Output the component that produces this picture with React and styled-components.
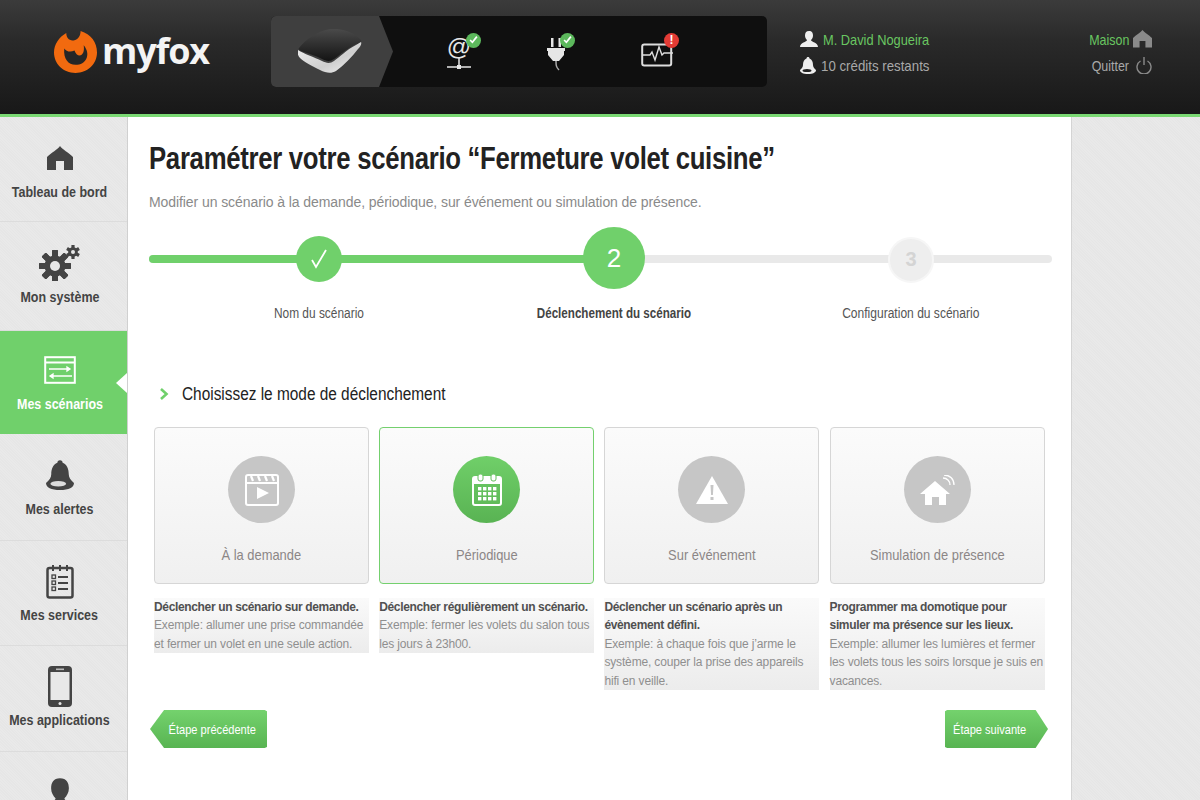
import React from 'react';
import styled, { createGlobalStyle } from 'styled-components';

const GlobalStyle = createGlobalStyle`
  html, body {
    margin: 0;
    padding: 0;
    background: #fff;
    font-family: 'Liberation Sans', Arial, sans-serif;
  }
  * { box-sizing: border-box; }
`;

const green = '#70d06b';
const texture = `repeating-linear-gradient(45deg, #e9e9e9 0 1px, #e6e6e6 1px 2px)`;

const Page = styled.div`
  width: 1200px;
  height: 800px;
  overflow: hidden;
  display: flex;
  flex-direction: column;
`;

// the reference font is a tall narrow grotesque, nothing installed has that width
const Narrow = styled.span`
  display: inline-block;
  white-space: nowrap;
  transform: scaleX(${(p) => p.$x || 0.85});
  transform-origin: ${(p) => p.$origin || 'center'};
`;

const Header = styled.header`
  flex: none;
  height: 117px;
  display: flex;
  align-items: flex-start;
  padding-top: 16px;
  background: linear-gradient(#3b3b3b, #2a2a2a 35%, #181818);
  border-bottom: 3px solid #7ad873;
`;

const Logo = styled.div`
  width: 271px;
  height: 71px;
  padding-left: 54px;
  display: flex;
  align-items: center;
  gap: 5px;
`;

const LogoText = styled.span`
  font-family: 'Open Sans', sans-serif;
  font-weight: 700;
  font-size: 36px;
  letter-spacing: -1.2px;
  color: #f4f4f4;
  line-height: 1;
  margin-top: -1px;
`;

const DeviceBar = styled.nav`
  width: 496px;
  height: 71px;
  display: flex;
  align-items: center;
  background: #0f0f0f;
  border-radius: 5px;
`;

const DeviceTab = styled.div`
  width: 122px;
  height: 71px;
  padding-left: 27px;
  display: flex;
  align-items: center;
  background: #3f3f3f;
  border-radius: 5px 0 0 5px;
  clip-path: polygon(0 0, 108px 0, 122px 50%, 108px 100%, 0 100%);
`;

const StatusIcon = styled.div`
  position: relative;
  width: 36px;
  height: 40px;
  margin-left: ${(p) => p.$offset}px;
  padding-bottom: ${(p) => p.$lift || 0}px;
  display: flex;
  align-items: flex-end;
  justify-content: center;
`;

const Badge = styled.span`
  position: absolute;
  top: 1px;
  right: ${(p) => p.$right}px;
  width: 15px;
  height: 15px;
  border-radius: 50%;
  background: ${(p) => (p.$alert ? '#e33b35' : '#5cb85c')};
  color: #fff;
  font-size: 12px;
  font-weight: 700;
  line-height: 15px;
  text-align: center;
`;

const UserBlock = styled.div`
  margin-left: 33px;
  width: 240px;
  padding-top: 13px;
  display: flex;
  flex-direction: column;
  gap: 6px;
`;

const HeadLine = styled.div`
  height: 20px;
  display: flex;
  align-items: center;
  gap: ${(p) => p.$gap || 4}px;
  justify-content: ${(p) => (p.$end ? 'flex-end' : 'flex-start')};
  font-size: 15px;
  color: ${(p) => (p.$on ? '#69c661' : '#a9a9a9')};
`;

const HomeBlock = styled(UserBlock)`
  margin-left: 0;
  width: 112px;
`;

const Body = styled.div`
  flex: 1;
  display: flex;
  min-height: 0;
`;

const Sidebar = styled.aside`
  width: 128px;
  flex: none;
  background: ${texture};
  border-right: 1px solid #d0d0d0;
`;

const NavItem = styled.a`
  position: relative;
  height: ${(p) => p.$height}px;
  display: flex;
  flex-direction: column;
  align-items: center;
  padding: ${(p) => p.$top}px 8px 0 0;
  border-bottom: 1px solid ${(p) => (p.$active ? green : '#dcdcdc')};
  background: ${(p) => (p.$active ? green : 'transparent')};
  color: ${(p) => (p.$active ? '#fff' : '#444')};
  font-size: 14.5px;
  font-weight: 700;
  white-space: nowrap;
`;

const NavIcon = styled.div`
  height: 44px;
  display: flex;
  align-items: center;
  justify-content: center;
  margin-bottom: 4px;
`;

const NavNotch = styled.span`
  position: absolute;
  right: 0;
  top: 42px;
  width: 0;
  height: 0;
  border-style: solid;
  border-width: 10px 11px 10px 0;
  border-color: transparent #fff transparent transparent;
`;

const Main = styled.main`
  width: 943px;
  flex: none;
  background: #fff;
  padding: 0 21px;
`;

const Title = styled.h1`
  margin: 24px 0 0;
  font-size: 31px;
  line-height: 36px;
  font-weight: 700;
  letter-spacing: -0.35px;
  color: #222;
  white-space: nowrap;
  transform: scaleX(0.83);
  transform-origin: left;
`;

const Subtitle = styled.p`
  margin: 16px 0 0;
  font-size: 14px;
  line-height: 18px;
  letter-spacing: -0.08px;
  color: #8a8a8a;
`;

const Stepper = styled.div`
  position: relative;
  margin-top: 16px;
  width: 903px;
  height: 62px;
  display: flex;
  padding-left: 23px;
`;

const Track = styled.div`
  position: absolute;
  left: 0;
  top: 28px;
  width: 100%;
  height: 8px;
  border-radius: 4px;
  background: #e9e9e9;
`;

const TrackFill = styled.div`
  height: 100%;
  border-radius: 4px 0 0 4px;
  background: ${green};
`;

const StepCell = styled.div`
  position: relative;
  flex: none;
  width: ${(p) => p.$width}px;
  display: flex;
  align-items: center;
  justify-content: center;
`;

const StepDot = styled.div`
  width: ${(p) => p.$size}px;
  height: ${(p) => p.$size}px;
  margin-top: ${(p) => (p.$off ? 3 : p.$size < 50 ? 1 : 0)}px;
  border-radius: 50%;
  display: flex;
  align-items: center;
  justify-content: center;
  background: ${(p) => (p.$off ? '#eeeeee' : green)};
  color: ${(p) => (p.$off ? '#d4d4d4' : '#fff')};
  font-size: ${(p) => p.$font}px;
  font-weight: ${(p) => (p.$off ? 700 : 400)};
  border: ${(p) => (p.$off ? '2px solid #f6f6f6' : 'none')};
`;

const StepLabels = styled.div`
  display: flex;
  margin-top: 15px;
  padding-left: 23px;
`;

const StepLabel = styled.div`
  flex: none;
  width: ${(p) => p.$width}px;
  text-align: center;
  font-size: 14px;
  line-height: 18px;
  font-weight: ${(p) => (p.$strong ? 700 : 400)};
  color: ${(p) => (p.$strong ? '#444' : '#555')};
`;

const SectionHead = styled.div`
  margin: 60px 0 0 11px;
  height: 24px;
  display: flex;
  align-items: center;
  gap: 13px;
  font-size: 18px;
  color: #222;
`;

const Grid = styled.div`
  margin: 21px 0 0 5px;
  width: 892px;
  display: grid;
  grid-template-columns: repeat(4, 215px);
  column-gap: 10.2px;
`;

const Card = styled.div`
  height: 157px;
  display: flex;
  flex-direction: column;
  align-items: center;
  padding-top: 28px;
  border: 1px solid ${(p) => (p.$on ? '#74d06e' : '#d6d6d6')};
  border-radius: 4px;
  background: linear-gradient(#fbfbfb, #f0f0f0);
`;

const CardIcon = styled.div`
  width: 67px;
  height: 67px;
  border-radius: 50%;
  display: flex;
  align-items: center;
  justify-content: center;
  background: ${(p) => (p.$on ? 'linear-gradient(#70cf69, #59b353)' : '#c6c6c6')};
`;

const CardLabel = styled.div`
  margin-top: 22px;
  font-size: 15px;
  line-height: 20px;
  color: #8b8686;
`;

const Desc = styled.div`
  margin-top: 14px;
  align-self: start;
  background: linear-gradient(#fafafa, #ececec);
  font-size: 12px;
  line-height: 18.4px;
  letter-spacing: -0.15px;
  color: #8f8f8f;
  white-space: nowrap;
`;

const Strong = styled.strong`
  display: block;
  color: #505050;
  letter-spacing: -0.35px;
`;

const Footer = styled.div`
  margin-top: 20px;
  width: 903px;
  display: flex;
  justify-content: space-between;
  padding: 0 4px 0 1px;
`;

const StepButton = styled.button`
  width: ${(p) => p.$width}px;
  height: 38px;
  padding: ${(p) => (p.$next ? '0 16px 0 0' : '0 0 0 8px')};
  border: none;
  font-family: 'Liberation Sans', sans-serif;
  font-size: 13.5px;
  white-space: nowrap;
  color: #fff;
  background: linear-gradient(#74d26d, #58b452);
  clip-path: ${(p) =>
    p.$next
      ? 'polygon(0 3%, 2% 0, 88% 0, 100% 50%, 88% 100%, 2% 100%, 0 97%)'
      : 'polygon(12% 0, 98% 0, 100% 3%, 100% 97%, 98% 100%, 12% 100%, 0 50%)'};
`;

const RightRail = styled.div`
  flex: 1;
  background: ${texture};
  border-left: 1px solid #d4d4d4;
`;

const FoxLogo = () => (
  <svg width="43" height="43" viewBox="0 0 42 42">
    <path fill="#f26a0f" d="M26 1C36 4 42 12 42 22C42 33 33 42 21 42C9 42 0 33 0 22C0 14 5 7 12 3C12 8 15 11 20 10C24 9 26 5 26 1Z" />
    <path fill="#262626" d="M10 18C12 21 16 22 20 20C21 23 23 25 25 25C28 25 30 21 29 15C33 20 33 24 32 27C30 32 26 34 21 34C14 34 9 28 10 18Z" />
  </svg>
);

const DeviceIcon = () => (
  <svg width="64" height="45" viewBox="0 0 64 45">
    <defs>
      <linearGradient id="shell" x1="0" y1="0" x2="0" y2="1">
        <stop offset="0" stopColor="#4a4a4a" />
        <stop offset="1" stopColor="#141414" />
      </linearGradient>
      <linearGradient id="base" x1="0" y1="0" x2="1" y2="1">
        <stop offset="0" stopColor="#f2f2f2" />
        <stop offset="0.6" stopColor="#cfcfcf" />
        <stop offset="1" stopColor="#f4f4f4" />
      </linearGradient>
    </defs>
    <path fill="url(#shell)" d="M1 19C8 10 20 2 32 0C44-1 56 3 63 11C64 13 62 14 58 15C48 20 42 26 36 30C32 33 28 32 24 30C16 26 8 24 3 22C1 21 0 20 1 19Z" />
    <path fill="url(#base)" d="M0 21C6 25 16 28 24 32C28 34 32 35 36 32C42 28 48 21 58 16L63 13C64 15 62 18 60 20C54 28 46 36 38 42C33 45 28 44 22 41C14 37 6 33 2 29C0 27-1 24 0 21Z" />
  </svg>
);

const AtIcon = () => (
  <svg width="26" height="40" viewBox="0 0 26 40">
    <text x="13" y="23" textAnchor="middle" fontFamily="'Liberation Sans', sans-serif" fontSize="24" fill="#e6e6e6">@</text>
    <path stroke="#e6e6e6" strokeWidth="1.5" fill="none" d="M13 26v10M1 35h24" />
    <rect x="11" y="33" width="4" height="4" fill="#e6e6e6" />
  </svg>
);

const PlugIcon = () => (
  <svg width="20" height="38" viewBox="0 0 20 38">
    <path fill="#e6e6e6" d="M5 4h2.5v9H5zM12.5 4H15v9h-2.5zM1 14h18v3h-1v4l-5 6H7l-5-6v-4H1z" />
    <path stroke="#aaa" strokeWidth="1.5" fill="none" d="M10 27c0 4 0 6 3 9" />
  </svg>
);

const MonitorIcon = () => (
  <svg width="32" height="24" viewBox="0 0 32 24">
    <rect x="1.200" y="1.500" width="29" height="21" rx="2" fill="none" stroke="#ddd" strokeWidth="2" />
    <path stroke="#ddd" strokeWidth="1.400" fill="none" d="M1 12h8l2-3 3 8 4-13 3 8 2-2h9" />
  </svg>
);

const HomeIcon = ({ size = 26, color = '#444' }) => (
  <svg width={size} height={size * 0.93} viewBox="0 0 26 24">
    <path fill={color} d="M13 0C15 3 22 7 26 11V24H17V15H9V24H0V11C4 7 11 3 13 0Z" />
  </svg>
);

const PowerIcon = () => (
  <svg width="16" height="17" viewBox="0 0 16 17">
    <path fill="none" stroke="#8a8a8a" strokeWidth="1.400" d="M4.500 4a7 7 0 1 0 7 0M8 0v8" />
  </svg>
);

const UserIcon = ({ width = 18, height = 16, color = '#eee' }) => (
  <svg width={width} height={height} viewBox="0 0 18 16">
    <path fill={color} d="M9 0c3 0 4 2 4 4.500 0 2-1 3.500-2 4.500 0 2 7 2.500 7 7H0c0-4.500 7-5 7-7C6 8 5 6.500 5 4.500 5 2 6 0 9 0Z" />
  </svg>
);

const BellIcon = ({ width = 16, height = 17, color = '#eee', hole = '#222' }) => (
  <svg width={width} height={height} viewBox="0 0 16 17">
    <path fill={color} d="M8 0c1 0 1.500.6 1.500 1.500C12 2.500 13 5 13 8c0 2 1 3 3 5 0 2.500-3 4-8 4s-8-1.500-8-4c2-2 3-3 3-5 0-3 1-5.500 3.500-6.500C6.500.6 7 0 8 0Z" />
    <ellipse cx="7" cy="13.500" rx="4.500" ry="1.600" fill={hole} />
  </svg>
);

const GearsIcon = () => (
  <svg width="42" height="36" viewBox="0 0 42 36">
    <g fill="#444">
      <circle cx="16" cy="21" r="10.500" />
      {[0, 45, 90, 135, 180, 225, 270, 315].map((a) => (
        <rect key={a} x="13" y="5" width="6" height="32" rx="1" transform={`rotate(${a} 16 21)`} />
      ))}
      <circle cx="34" cy="7" r="4.800" />
      {[0, 60, 120].map((a) => (
        <rect key={a} x="32.400" y="0" width="3.200" height="14" rx="0.500" transform={`rotate(${a} 34 7)`} />
      ))}
    </g>
    <circle cx="16" cy="21" r="5" fill="#e8e8e8" />
    <circle cx="34" cy="7" r="2" fill="#e8e8e8" />
  </svg>
);

const ScenarioIcon = () => (
  <svg width="32" height="28" viewBox="0 0 32 28">
    <rect x="1.200" y="1.200" width="29.600" height="25.600" fill="none" stroke="#fff" strokeWidth="2" />
    <path stroke="#fff" strokeWidth="2" d="M1 6.500h30" />
    <path stroke="#fff" strokeWidth="1.300" fill="#fff" d="M5 13h21M23 11l3 2-3 2zM7 20h21M9 18l-3 2 3 2z" />
  </svg>
);

const ListIcon = () => (
  <svg width="28" height="35" viewBox="0 0 28 35">
    <rect x="1.500" y="4" width="25" height="29.500" rx="2" fill="none" stroke="#444" strokeWidth="2.500" />
    <path stroke="#444" strokeWidth="2" d="M7 1v6M14 1v6M21 1v6" />
    <g fill="none" stroke="#444" strokeWidth="1.300">
      <rect x="6" y="11" width="3.500" height="3.500" />
      <rect x="6" y="17" width="3.500" height="3.500" />
      <rect x="6" y="23" width="3.500" height="3.500" />
    </g>
    <path stroke="#444" strokeWidth="2" d="M12 13h10M12 19h10M12 25h10" />
  </svg>
);

const PhoneIcon = () => (
  <svg width="24" height="41" viewBox="0 0 24 41">
    <rect x="0" y="0" width="24" height="41" rx="4" fill="#444" />
    <rect x="2.500" y="6" width="19" height="28" fill="#e8e8e8" />
    <rect x="8" y="2.500" width="8" height="1.600" fill="#bbb" />
    <circle cx="12" cy="37.500" r="1.500" fill="#e8e8e8" />
  </svg>
);

const ClapIcon = () => (
  <svg width="34" height="32" viewBox="0 0 34 32">
    <rect x="1" y="1" width="32" height="30" rx="2" fill="none" stroke="#fff" strokeWidth="2" />
    <path stroke="#fff" strokeWidth="2" d="M1 9h32" />
    <path stroke="#fff" strokeWidth="2.200" d="M6 2l2 5M13 2l2 5M20 2l2 5M27 2l2 5" />
    <path fill="#fff" d="M12 13l12 6-12 6z" />
  </svg>
);

const CalendarIcon = () => (
  <svg width="30" height="32" viewBox="0 0 30 32">
    <rect x="1" y="3" width="28" height="28" rx="2" fill="none" stroke="#fff" strokeWidth="2" />
    <path fill="#fff" d="M1 4h28v6H1z" />
    <rect x="6" y="0" width="5" height="7" rx="2" fill="#fff" stroke="#64c05d" />
    <rect x="19" y="0" width="5" height="7" rx="2" fill="#fff" stroke="#64c05d" />
    {[0, 1, 2].map((r) =>
      [0, 1, 2, 3].map((c) => (
        <rect key={`${r}${c}`} x={6 + c * 5} y={13 + r * 5} width="3.400" height="3.400" fill="#fff" />
      ))
    )}
  </svg>
);

const WarnIcon = () => (
  <svg width="34" height="30" viewBox="0 0 34 30">
    <path fill="#fff" d="M17 1 L33 29 H1 Z" />
    <path fill="#c6c6c6" d="M15.500 10h3l-.6 10h-1.800zM15.500 22h3v3h-3z" />
  </svg>
);

const SmartHomeIcon = () => (
  <svg width="36" height="30" viewBox="0 0 36 30">
    <path fill="#fff" d="M16 6 L31 19 H27 V30 H20 V22 H13 V30 H6 V19 H1 Z" />
    <path fill="none" stroke="#fff" strokeWidth="1.300" d="M24 3c4 0 7 3 7 7M25 0c6 0 10 4 10 10" />
  </svg>
);

const Chevron = () => (
  <svg width="9" height="12" viewBox="0 0 9 12">
    <path fill="none" stroke="#70d06b" strokeWidth="2.600" d="M1 1l5.500 5L1 11" />
  </svg>
);

const Check = () => (
  <svg width="18" height="20" viewBox="0 0 18 20">
    <path fill="none" stroke="#fff" strokeWidth="1.800" d="M2 11l4 7L16 1" />
  </svg>
);

const TinyCheck = () => (
  <svg width="9" height="8" viewBox="0 0 8 7" style={{ display: 'block', margin: '3.500px auto 0' }}>
    <path fill="none" stroke="#fff" strokeWidth="1.500" d="M1 3.500l2 2 4-5" />
  </svg>
);

const navItems = [
  { label: 'Tableau de bord', icon: <HomeIcon />, height: 105, top: 19 },
  { label: 'Mon système', icon: <GearsIcon />, height: 109, top: 19 },
  { label: 'Mes scénarios', icon: <ScenarioIcon />, height: 103, top: 17, active: true },
  { label: 'Mes alertes', icon: <BellIcon width={28} height={30} color="#444" hole="#ddd" />, height: 107, top: 19 },
  { label: 'Mes services', icon: <ListIcon />, height: 105, top: 18 },
  { label: 'Mes applications', icon: <PhoneIcon />, height: 106, top: 18 },
  { label: '', icon: <UserIcon width={40} height={42} color="#444" />, height: 60, top: 23 },
];

const modes = [
  {
    label: 'À la demande',
    icon: <ClapIcon />,
    lead: ['Déclencher un scénario sur demande.'],
    text: ['Exemple: allumer une prise commandée', 'et fermer un volet en une seule action.'],
  },
  {
    label: 'Périodique',
    icon: <CalendarIcon />,
    on: true,
    lead: ['Déclencher régulièrement un scénario.'],
    text: ['Exemple: fermer les volets du salon tous', 'les jours à 23h00.'],
  },
  {
    label: 'Sur événement',
    icon: <WarnIcon />,
    lead: ['Déclencher un scénario après un', 'évènement défini.'],
    text: ['Exemple: à chaque fois que j’arme le', 'système, couper la prise des appareils', 'hifi en veille.'],
  },
  {
    label: 'Simulation de présence',
    icon: <SmartHomeIcon />,
    lead: ['Programmer ma domotique pour', 'simuler ma présence sur les lieux.'],
    text: ['Exemple: allumer les lumières et fermer', 'les volets tous les soirs lorsque je suis en', 'vacances.'],
  },
];

const lines = (arr) => arr.map((l) => <div key={l}>{l}</div>);

export default function App() {
  return (
    <Page>
      <GlobalStyle />
      <Header>
        <Logo>
          <FoxLogo />
          <LogoText>myfox</LogoText>
        </Logo>
        <DeviceBar>
          <DeviceTab>
            <DeviceIcon />
          </DeviceTab>
          <StatusIcon $offset={48}>
            <AtIcon />
            <Badge $right={-4}><TinyCheck /></Badge>
          </StatusIcon>
          <StatusIcon $offset={61}>
            <PlugIcon />
            <Badge $right={-1}><TinyCheck /></Badge>
          </StatusIcon>
          <StatusIcon $offset={65} $lift={5}>
            <MonitorIcon />
            <Badge $right={-4} $alert>!</Badge>
          </StatusIcon>
        </DeviceBar>
        <UserBlock>
          <HeadLine $on $gap={5}>
            <UserIcon />
            <Narrow $x={0.855} $origin="left">M. David Nogueira</Narrow>
          </HeadLine>
          <HeadLine $gap={5}>
            <BellIcon />
            <Narrow $x={0.885} $origin="left">10 crédits restants</Narrow>
          </HeadLine>
        </UserBlock>
        <HomeBlock>
          <HeadLine $on $end>
            <Narrow $x={0.83} $origin="right">Maison</Narrow>
            <HomeIcon size={19} color="#8a8a8a" />
          </HeadLine>
          <HeadLine $end $gap={7}>
            <Narrow $x={0.83} $origin="right">Quitter</Narrow>
            <PowerIcon />
          </HeadLine>
        </HomeBlock>
      </Header>
      <Body>
        <Sidebar>
          {navItems.map((item, i) => (
            <NavItem key={i} $height={item.height} $top={item.top} $active={item.active}>
              <NavIcon>{item.icon}</NavIcon>
              <Narrow $x={0.86}>{item.label}</Narrow>
              {item.active && <NavNotch />}
            </NavItem>
          ))}
        </Sidebar>
        <Main>
          <Title>Paramétrer votre scénario “Fermeture volet cuisine”</Title>
          <Subtitle>Modifier un scénario à la demande, périodique, sur événement ou simulation de présence.</Subtitle>
          <Stepper>
            <Track>
              <TrackFill style={{ width: '51%' }} />
            </Track>
            <StepCell $width={294}>
              <StepDot $size={46}><Check /></StepDot>
            </StepCell>
            <StepCell $width={296}>
              <StepDot $size={62} $font={26}>2</StepDot>
            </StepCell>
            <StepCell $width={298}>
              <StepDot $size={46} $font={20} $off>3</StepDot>
            </StepCell>
          </Stepper>
          <StepLabels>
            <StepLabel $width={294}><Narrow $x={0.85}>Nom du scénario</Narrow></StepLabel>
            <StepLabel $width={296} $strong><Narrow $x={0.83}>Déclenchement du scénario</Narrow></StepLabel>
            <StepLabel $width={298}><Narrow $x={0.86}>Configuration du scénario</Narrow></StepLabel>
          </StepLabels>
          <SectionHead>
            <Chevron />
            <Narrow $x={0.855} $origin="left">Choisissez le mode de déclenchement</Narrow>
          </SectionHead>
          <Grid>
            {modes.map((m) => (
              <Card key={m.label} $on={m.on}>
                <CardIcon $on={m.on}>{m.icon}</CardIcon>
                <CardLabel><Narrow $x={0.86}>{m.label}</Narrow></CardLabel>
              </Card>
            ))}
            {modes.map((m) => (
              <Desc key={m.label}>
                <Strong>{lines(m.lead)}</Strong>
                {lines(m.text)}
              </Desc>
            ))}
          </Grid>
          <Footer>
            <StepButton $width={117}><Narrow $x={0.82}>Étape précédente</Narrow></StepButton>
            <StepButton $width={103} $next><Narrow $x={0.82}>Étape suivante</Narrow></StepButton>
          </Footer>
        </Main>
        <RightRail />
      </Body>
    </Page>
  );
}
